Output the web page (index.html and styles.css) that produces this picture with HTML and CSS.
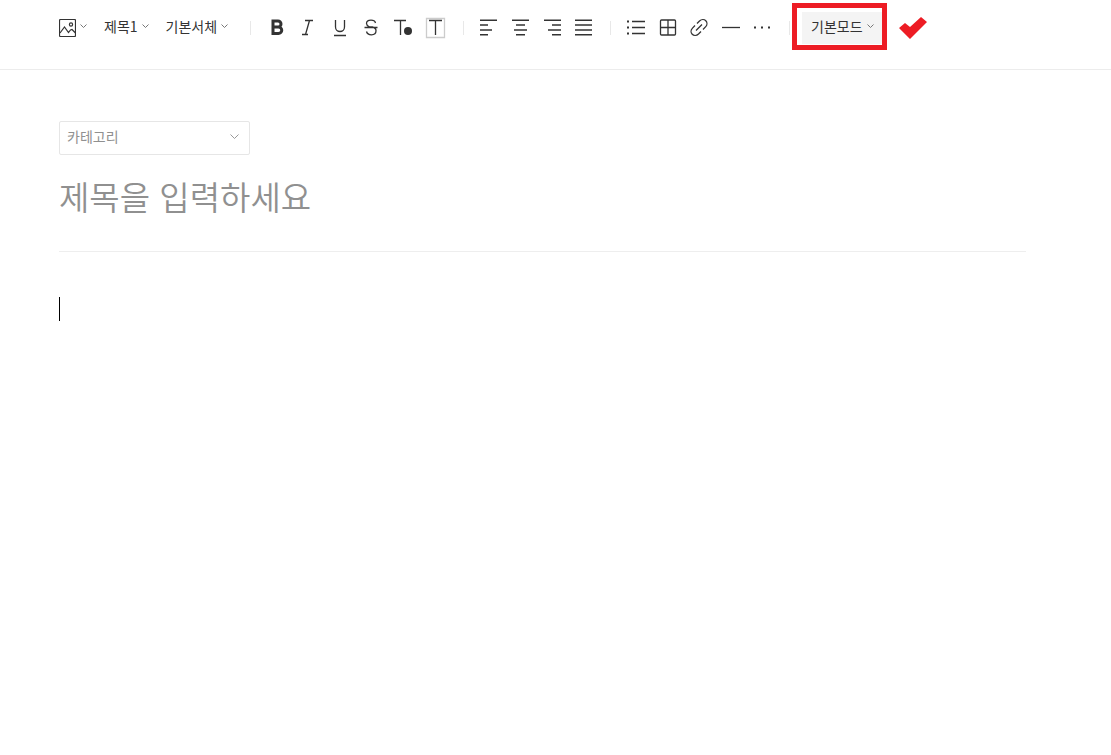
FILE: index.html
```html
<!doctype html>
<html lang="ko">
<head>
<meta charset="utf-8">
<title>글쓰기</title>
<link rel="stylesheet" href="styles.css">
</head>

<body>
	<header class="toolbar">
		<div class="menus">
			<button type="button" class="menu" aria-label="사진">
				<svg class="photo" width="17" height="18" viewBox="0 0 17 18"><rect x=".5" y=".5" width="16" height="17" rx="1"/><circle cx="12" cy="5.5" r="1.6"/><path d="M1 14l4.5-6 4 5.5 2-2.5 1.5-.5 3.5 3.5"/></svg>
				<svg class="arrow" width="7" height="4" viewBox="0 0 7 4"><path d="M.5.5l3 3 3-3"/></svg>
			</button>
			<button type="button" class="menu">제목1
				<svg class="arrow" width="7" height="4" viewBox="0 0 7 4"><path d="M.5.5l3 3 3-3"/></svg>
			</button>
			<button type="button" class="menu">기본서체
				<svg class="arrow" width="7" height="4" viewBox="0 0 7 4"><path d="M.5.5l3 3 3-3"/></svg>
			</button>
		</div>

		<div class="group font">
			<button type="button" aria-label="굵게"><svg width="24" height="24" viewBox="0 0 24 24"><path stroke-width="3" d="M8 6h5a2.8 2.8 0 0 1 0 6H8zM8 12h5.5a3.2 3.2 0 0 1 0 6.5H8z"/></svg></button>
			<button type="button" aria-label="기울임"><svg width="24" height="24" viewBox="0 0 24 24"><path d="M8 5.5h8M5 19.5h6M12.5 5.5l-4 14"/></svg></button>
			<button type="button" aria-label="밑줄"><svg width="24" height="24" viewBox="0 0 24 24"><path d="M6.5 5v7a4.5 4.5 0 0 0 9 0V5M5 20.5h12"/></svg></button>
			<button type="button" aria-label="취소선"><svg width="24" height="24" viewBox="0 0 24 24"><path d="M15.5 8C15 6 13.5 5.2 11 5.2c-2.5 0-4.5 1.2-4.5 3.3 0 1.8 1 2.5 3 3.5h3c2.5.6 3.5 2 3.5 3.8 0 2.500-2 4-4.500 4-3 0-4.500-1.300-5-3.300M4.500 12.500h13"/></svg></button>
			<button type="button" aria-label="글자색"><svg width="24" height="24" viewBox="0 0 24 24"><path d="M2 5.5h12M8.5 5.5V20"/><circle class="dot" cx="16" cy="16" r="4"/></svg></button>
			<button type="button" aria-label="배경색"><svg width="24" height="24" viewBox="0 0 24 24"><path class="pale" d="M2.5 3.5h18v19h-18z"/><path d="M5 5.5h13M11.5 5.5V20"/></svg></button>
		</div>

		<div class="group align">
			<button type="button" aria-label="왼쪽 정렬"><svg width="24" height="24" viewBox="0 0 24 24"><path d="M4 5.3h17M4 10h8M4 15h12M4 19.7h8"/></svg></button>
			<button type="button" aria-label="가운데 정렬"><svg width="24" height="24" viewBox="0 0 24 24"><path d="M4 5.3h17M8 10h9M6 15h13M8 19.7h9"/></svg></button>
			<button type="button" aria-label="오른쪽 정렬"><svg width="24" height="24" viewBox="0 0 24 24"><path d="M4 5.3h17M12 10h9M8 15h13M12 19.7h9"/></svg></button>
			<button type="button" aria-label="양쪽 정렬"><svg width="24" height="24" viewBox="0 0 24 24"><path d="M3 5.3h17M3 10h17M3 15h17M3 19.7h17"/></svg></button>
		</div>

		<div class="group insert">
			<button type="button" aria-label="목록"><svg width="24" height="24" viewBox="0 0 24 24"><path d="M8 6.5h13M8 12.5h13M8 18.5h13"/><path stroke-width="2" d="M3 6.5h2M3 12.5h2M3 18.5h2"/></svg></button>
			<button type="button" aria-label="표"><svg width="24" height="24" viewBox="0 0 24 24"><rect x="4.5" y="5" width="15" height="15" rx="1"/><path d="M12 5v15M4.5 12.5h15"/></svg></button>
			<button type="button" aria-label="링크"><svg width="24" height="24" viewBox="0 0 24 24"><path d="M9 8.5l2.500-2.500c2-1.900 4.800-1.800 6.300-.3s1.600 4.200-.3 6.200l-2.500 2.600M13 16.500l-2.500 2.500c-2 1.900-4.800 1.800-6.300.3s-1.600-4.200.3-6.200l2.500-2.600M8 15.500l6-6"/></svg></button>
			<button type="button" aria-label="구분선"><svg width="24" height="24" viewBox="0 0 24 24"><path d="M3 12.5h18"/></svg></button>
			<button type="button" aria-label="더보기"><svg width="24" height="24" viewBox="0 0 24 24"><path stroke-width="2" d="M3 12.5h2M10 12.5h2M17 12.5h2"/></svg></button>
		</div>

		<div class="mode">
			<button type="button" class="menu">기본모드
				<svg class="arrow" width="7" height="4" viewBox="0 0 7 4"><path d="M.5.5l3 3 3-3"/></svg>
			</button>
		</div>
		<svg class="check" width="28" height="22" viewBox="0 0 28 22"><path d="M0 11l6-5 5 4L22 0l6 5-17 17z"/></svg>
	</header>

	<main class="editor">
		<div class="category">
			<select aria-label="카테고리">
				<option>카테고리</option>
			</select>
			<svg class="arrow" width="9" height="5" viewBox="0 0 9 5"><path d="M.5.5l4 4 4-4"/></svg>
		</div>
		<input class="title" type="text" placeholder="제목을 입력하세요" aria-label="제목">
		<div class="content" role="textbox" aria-label="내용" contenteditable="true"><span class="caret"></span></div>
	</main>
</body>
</html>
```

FILE: styles.css
```css
*, :before, :after{margin:0; padding:0; box-sizing:border-box;}
body{background:#fff; color:#333; font:14px/24px "Noto Sans CJK KR", sans-serif;}
button, input, select{border:0; background:none; color:inherit; font:inherit;}
button{cursor:pointer;}
svg{display:block; flex:none; fill:none; stroke:#333;}

.toolbar{display:flex; align-items:flex-start; height:70px; padding:12px 0 0 59px; border-bottom:1px solid #ececec;}
.menus{display:flex; gap:17px; width:191px;}
.menu{display:flex; align-items:center; gap:4px; height:32px; padding-bottom:4px; white-space:nowrap;}
.arrow{stroke:#777;}
.photo{stroke-width:1.2;}
.menu .photo{margin-top:4px;}

.group{display:flex; justify-content:space-between; align-items:center; height:32px; padding-bottom:2px; position:relative;}
.group:before, .mode:before{content:""; position:absolute; left:0; top:9px; width:1px; height:14px; background:#e8e8e8;}
.group .dot{fill:#333; stroke:none;}
.group .pale{stroke:#ccc;}
.group svg{stroke-width:1.3;}
.group.align svg{stroke-width:1.6;}
.group.font{width:213px; padding:0 15px 2px;}
.group.align{width:147px; padding:0 14px 2px 13px;}
.group.insert{width:179px; padding:0 14px 2px;}

.mode{position:relative; padding-left:13px;}
.mode .menu{width:80px; padding-left:9px; background:#f4f4f4;}
.mode:after{content:""; position:absolute; left:3px; top:-9px; width:95px; height:47px; border:5px solid #ed1c24;}
.check{margin:5px 0 0 17px; fill:#ed1c24; stroke:none;}

.editor{padding:51px 85px 0 59px;}
.category{position:relative; width:191px;}
.category select{display:block; width:100%; height:34px; padding:0 30px 4px 7px; border:1px solid #e6e6e6; border-radius:2px; color:#909090; -webkit-appearance:none; appearance:none;}
.category .arrow{position:absolute; right:11px; top:13px; stroke:#999; pointer-events:none;}
.title{display:block; width:100%; height:97px; padding-bottom:14px; border-bottom:1px solid #eee; font-size:33px; font-weight:350; outline:0;}
.title::placeholder{color:#909090; opacity:1;}
.content{min-height:300px; padding-top:45px; outline:0;}
.caret{display:block; width:1px; height:24px; background:#000;}
```
